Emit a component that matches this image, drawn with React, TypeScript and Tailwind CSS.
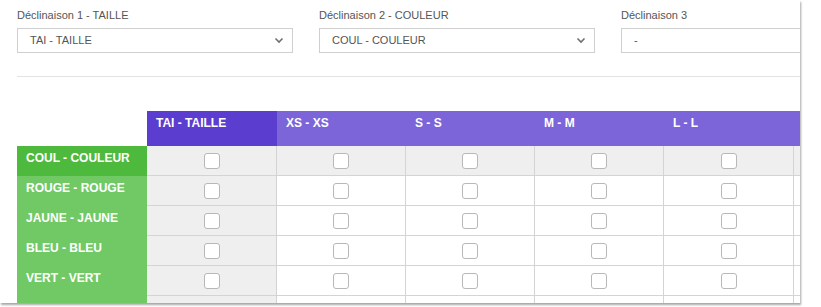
import type { ReactNode } from "react";

const font = { fontFamily: '"Liberation Sans", Arial, sans-serif' };

const selects = [
  { label: "Déclinaison 1 - TAILLE", value: "TAI - TAILLE", chevron: true },
  { label: "Déclinaison 2 - COULEUR", value: "COUL - COULEUR", chevron: true },
  { label: "Déclinaison 3", value: "-", chevron: false },
];

const columns = ["TAI - TAILLE", "XS - XS", "S - S", "M - M", "L - L", ""];
const colWidths = ["w-[130px]", "w-[129px]", "w-[129px]", "w-[129px]", "w-[130px]", "w-[130px]"];
const rows = ["COUL - COULEUR", "ROUGE - ROUGE", "JAUNE - JAUNE", "BLEU - BLEU", "VERT - VERT", ""];

function Chevron() {
  return (
    <svg width="10" height="7" viewBox="0 0 10 7" className="text-[#6f6f6f]">
      <path d="M1.5 1.5 L5 5 L8.5 1.5" fill="none" stroke="currentColor" strokeWidth="1.6" />
    </svg>
  );
}

function Select({ label, value, chevron }: { label: string; value: string; chevron: boolean }) {
  return (
    <div className="w-[276px] shrink-0">
      <div className="text-[11px] leading-[13px] text-[#555]">{label}</div>
      <div className="mt-[6px] flex h-[25px] items-center justify-between border border-[#cfcfcf] bg-white pl-[12px] pr-[8px]">
        <span className="text-[11px] text-[#555]">{value}</span>
        {chevron && <Chevron />}
      </div>
    </div>
  );
}

function Checkbox() {
  return <div className="h-[16px] w-[16px] rounded-[3px] border border-[#b8b8b8] bg-white" />;
}

function Cell({ children, className }: { children?: ReactNode; className: string }) {
  return (
    <div className={`flex h-[30px] shrink-0 items-center justify-center border-b border-r border-[#d4d4d4] ${className}`}>
      {children}
    </div>
  );
}

export default function App() {
  return (
    <div className="h-[307px] w-[821px] bg-white" style={font}>
      <div className="h-[303px] w-[800px] overflow-hidden bg-white pl-[17px] pt-[9px] shadow-[1px_2px_2px_rgba(0,0,0,0.35)]">
        <div className="flex gap-[26px]">
          {selects.map((s) => (
            <Select key={s.label} {...s} />
          ))}
        </div>
        <div className="mt-[23px] border-t border-[#e3e3e3]" />

        <div className="mt-[34px] flex w-max">
          <div className="flex w-[130px] shrink-0 flex-col">
            <div className="h-[35px]" />
            {rows.map((r, i) => (
              <div
                key={i}
                className={`h-[30px] px-[9px] pt-[5px] text-[12px] font-bold leading-[14px] text-white ${
                  i === 0 ? "bg-[#4dba3d]" : "bg-[#71c965]"
                }`}
              >
                {r}
              </div>
            ))}
          </div>

          {columns.map((c, ci) => (
            <div key={ci} className={`flex shrink-0 flex-col ${colWidths[ci]}`}>
              <div
                className={`h-[35px] px-[9px] pt-[5px] text-[12px] font-bold leading-[14px] text-white ${
                  ci === 0 ? "bg-[#5b3dcf]" : "bg-[#7b65d9]"
                }`}
              >
                {c}
              </div>
              {rows.map((_, ri) => (
                <Cell
                  key={ri}
                  className={`${colWidths[ci]} ${ci === 0 || ri === 0 ? "bg-[#efefef]" : "bg-white"}`}
                >
                  {ci < 5 && ri < 5 && <Checkbox />}
                </Cell>
              ))}
            </div>
          ))}
        </div>
      </div>
    </div>
  );
}
